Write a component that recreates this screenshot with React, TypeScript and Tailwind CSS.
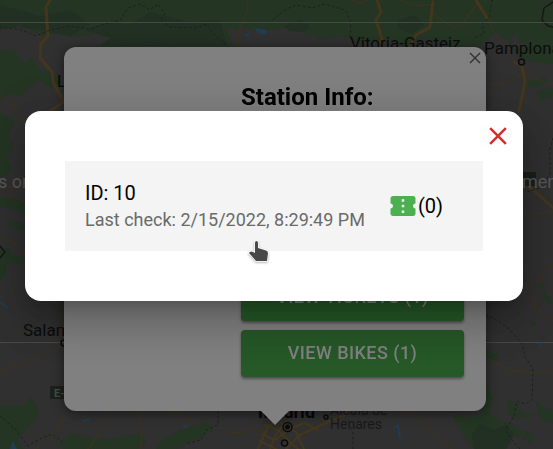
import React from "react";

const forest = [
  "M0 0H553V64L535 62L520 58L508 40L497 32L480 45L458 50L440 42L425 38L405 47L390 40L360 42L340 36L318 40L303 33L295 22L285 28L262 31L243 28L227 32L236 46L200 48L150 46L100 47L111 38L95 34L70 37L52 33L45 37L30 30L20 27L0 30Z",
  "M0 48L14 50L24 62L32 58L42 72L50 70L62 82L50 88L40 80L30 86L22 96L10 94L0 100Z",
  "M0 112L15 122L8 134L14 148L6 158L12 170L0 178Z",
  "M0 198L16 199L25 204V214L14 210L4 206L0 208Z",
  "M12 220L24 225V231L10 225Z",
  "M0 250L8 248L14 256L25 258L22 265L8 262L6 274L0 282Z",
  "M0 406L24 405L31 397L39 410L36 420L28 428L18 440L24 449H0Z",
  "M58 444L70 433L98 440L140 434L147 442L140 449H64Z",
  "M162 440L178 431L206 422L215 430L198 439L176 449H156Z",
  "M487 385L493 397L490 410L484 412Z",
  "M452 415L472 418L487 408L492 416L511 425L524 431L520 437L500 436L490 449H475L466 440Z",
  "M486 350L498 356L497 361L486 358Z",
  "M508 361L515 358L514 362Z",
  "M507 400L519 404L518 410L534 416L518 419L508 415Z",
  "M526 430L534 436L533 444L522 439Z",
  "M535 400L553 412V424L540 418Z",
  "M538 282L544 284L542 289Z",
  "M544 292L552 301L550 305L543 297Z",
  "M517 311L523 317L518 316Z",
  "M529 320L536 323L534 328Z",
  "M525 82L545 77L549 84L530 88Z",
  "M536 92L553 88V96L540 100Z",
];

const darkForest = [
  "M85 30L110 22L130 25L150 12L190 22L220 20L227 46H130L100 45L112 38Z",
  "M284 26L300 20L310 26L303 32L290 31Z",
  "M398 20L415 15L424 24L412 34L398 29Z",
  "M472 435L480 424L494 430L506 425L514 434L506 449H474Z",
  "M0 5L40 16L70 10L90 25L70 36L40 30L20 27L0 29Z",
];

const clearings = [
  "M8 32L18 26L32 34L36 41L58 36L48 42L28 46L0 50V33Z",
  "M226 28L240 30L248 46H233Z",
  "M510 38L520 33L518 42L530 46L515 50Z",
  "M273 36L287 32L303 37L318 34L315 47H283Z",
];

const roads = [
  "M50 0L46 7L48 36L41 44L40 58L52 72L53 82L60 95L64 102L50 111",
  "M377 0L381 12L376 20L382 39L378 47",
  "M409 47L416 35L430 27L433 2",
  "M476 0L484 13L487 18",
  "M514 62L522 66L525 82L519 111",
  "M525 183L540 196L553 208",
];

const minorRoads = [
  "M0 95L12 104L17 111",
  "M247 0L248 9L238 33L239 47",
  "M350 0L362 3L370 -2",
  "M400 0L415 6L434 4",
  "M434 15L455 28L462 24L477 4",
  "M477 4L490 24L498 38L514 60",
  "M40 33V47",
  "M15 115L25 122M0 187H25M0 191L25 202M0 238L14 243L25 255",
  "M0 371L31 360L64 345M61 301V340",
  "M64 410L62 422L52 434L42 438L36 449",
  "M487 83L505 84L516 77L526 72L546 84L553 83",
  "M525 286L534 280L540 283L546 266L553 266",
  "M525 295L540 311L553 321",
  "M525 215L553 212",
  "M486 358L510 370L530 373L553 371",
  "M88 449L104 427L112 411M138 411L143 430L140 449M170 411L200 424",
  "M227 432L242 433L255 429L268 432",
  "M404 411L424 422L436 435L452 449",
];

const borders = [
  "M0 27L22 30L36 36L50 30L70 26L90 29L105 24L120 20L128 8L140 4L150 10L158 4L165 14L160 20L170 27L195 28L207 24L215 36L228 46",
  "M273 20L285 10L296 5L312 8L325 4L345 10L351 23L350 40",
  "M492 0L489 18L482 24L484 34L474 38",
  "M486 315L500 322L510 330L522 344L525 357L533 368L532 400L525 404L517 401L514 416L506 430L512 440L520 449",
  "M553 138L550 150L550 174L540 188L527 192",
  "M0 416L16 430L28 446L38 440L52 434L62 442",
  "M218 411V425L206 430L201 440L185 444M353 449V434L350 425",
];

const cityRoads = [
  "M258 449L268 427L276 420L296 432L304 449",
  "M262 434L275 440L288 430L304 423L318 430",
  "M270 449L276 434L286 422M286 449L300 435L328 422L348 414",
  "M260 441L276 449M265 425L278 430L292 444L298 449",
];

function MapBackdrop() {
  return (
    <svg
      className="absolute inset-0 h-full w-full"
      viewBox="0 0 553 449"
      preserveAspectRatio="xMidYMid slice"
      fontFamily="Roboto, sans-serif"
      aria-hidden="true"
    >
      <rect width="553" height="449" fill="#303030" />
      {forest.map((d) => <path key={d} d={d} fill="#243523" />)}
      {darkForest.map((d) => <path key={d} d={d} fill="#222f23" />)}
      {clearings.map((d) => <path key={d} d={d} fill="#303030" />)}
      <g fill="none" strokeLinejoin="round" strokeLinecap="round">
        {minorRoads.map((d) => <path key={d} d={d} stroke="#3b3221" strokeWidth="1.3" />)}
        {cityRoads.map((d) => <path key={d} d={d} stroke="#42361d" strokeWidth="2" />)}
        {roads.map((d) => <path key={d} d={d} stroke="#43361d" strokeWidth="3" />)}
        {borders.map((d) => <path key={d} d={d} stroke="#1d211e" strokeDasharray="2 3" />)}
        <path d="M553 2L544 8L542 20L548 26L553 27" stroke="#171717" strokeWidth="1.5" />
        <path d="M0 246L5 252L0 258" stroke="#171717" strokeWidth="1.5" />
        <path d="M0 302L7 308M83 421L89 419M536 341L540 345M394 428L398 425L400 437" stroke="#203c50" strokeWidth="2" />
      </g>
      <path d="M243 35L250 33L248 37ZM254 28L262 29L268 31L265 35L258 33ZM13 440L17 449H10ZM182 425L190 426L184 428Z" fill="#203c50" />
      <path d="M0 22.5H553M0 342.5H553" stroke="#454a45" />
      <g fill="#0c0c0c" fontSize="17">
        <text x="350" y="49">Vitoria-Gasteiz</text>
        <text x="484" y="54">Pamplona</text>
        <text x="57" y="87">León</text>
        <text x="23" y="336">Salamanca</text>
      </g>
      <text x="258" y="418" fill="#080808" fontSize="18" fontWeight="700">Madrid</text>
      <g fill="#191919" fontSize="14">
        <text x="330" y="415">Alcalá de</text>
        <text x="330" y="429">Henares</text>
      </g>
      <g fill="none" stroke="#0c0c0c" strokeWidth="1.5">
        <circle cx="521.5" cy="62" r="3" />
        <circle cx="64" cy="343" r="3" />
        <circle cx="326" cy="417" r="2" />
        <circle cx="284.5" cy="443" r="3" />
        <circle cx="287.5" cy="427" r="4.5" />
      </g>
      <circle cx="287.5" cy="427" r="2.5" fill="#0c0c0c" />
      <rect x="50" y="386" width="22" height="13" fill="#1b211b" />
      <text x="54" y="397" fill="#484c48" fontSize="11" fontWeight="700">E-80</text>
      <rect x="520" y="172" width="16" height="14" fill="#191f19" />
      <g fill="#585858" fontSize="18">
        <text x="-2" y="188">s on</text>
        <text x="522" y="188">men</text>
      </g>
    </svg>
  );
}

const actionClass =
  "h-[47px] w-full rounded bg-[#265828] pb-[2px] text-lg font-medium tracking-wide text-[#808080] shadow-[0_2px_3px_rgba(0,0,0,0.4)]";

function StationPopup() {
  return (
    <section className="absolute top-[47px] left-[64px] w-[422px] drop-shadow-[0_2px_6px_rgba(0,0,0,0.5)]">
      <div className="flex flex-col items-end rounded-xl bg-[#808080] pt-8 pr-[22px] pb-[34px]">
        <div className="flex w-[223px] flex-col gap-[9px]">
          <h2 className="mb-[150px] text-2xl leading-9 font-bold text-black">Station Info:</h2>
          <button type="button" className={actionClass}>VIEW TICKETS (1)</button>
          <button type="button" className={actionClass}>VIEW BIKES (1)</button>
        </div>
      </div>
      <button type="button" aria-label="Close station info" className="absolute top-1 right-1">
        <svg className="size-[14px]" viewBox="0 0 14 14" stroke="#303030" strokeWidth="1.4">
          <path d="M2 2L12 12M12 2L2 12" />
        </svg>
      </button>
      <svg className="absolute top-full left-1/2 h-[14px] w-7 -translate-x-1/2" viewBox="0 0 28 14">
        <path d="M0 0H28L14 14Z" fill="#808080" />
      </svg>
    </section>
  );
}

function TicketIcon() {
  return (
    <svg className="size-[30px] shrink-0" viewBox="0 0 24 24" fill="#4caf50" aria-hidden="true">
      <path d="M22 10V6c0-1.11-.9-2-2-2H4c-1.1 0-1.99.89-1.99 2v4c1.1 0 1.99.9 1.99 2s-.89 2-2 2v4c0 1.1.9 2 2 2h16c1.1 0 2-.9 2-2v-4c-1.1 0-2-.9-2-2s.9-2 2-2zm-9 7.5h-2v-2h2v2zm0-4.5h-2v-2h2v2zm0-4.5h-2v-2h2v2z" />
    </svg>
  );
}

function TicketsDialog() {
  return (
    <div className="relative flex min-h-screen items-start pt-[111px] pr-[30px] pl-[25px]">
      <div
        role="dialog"
        aria-label="Tickets"
        className="relative w-full rounded-2xl bg-white px-10 py-[50px] shadow-[0_11px_15px_-7px_rgba(0,0,0,0.2),0_24px_38px_3px_rgba(0,0,0,0.14),0_9px_46px_8px_rgba(0,0,0,0.12)]"
      >
        <button type="button" aria-label="Close" className="absolute top-[10px] right-[10px]">
          <svg className="size-[30px]" viewBox="0 0 24 24" fill="#d32f2f">
            <path d="M19 6.41L17.59 5 12 10.59 6.41 5 5 6.41 10.59 12 5 17.59 6.41 19 12 13.41 17.59 19 19 17.59 13.41 12z" />
          </svg>
        </button>
        <div className="flex items-center gap-[23px] bg-[#f4f4f4] px-5 py-[18px]">
          <div className="whitespace-nowrap">
            <p className="text-xl leading-7 text-black">ID: 10</p>
            <p className="text-lg leading-[26px] text-[#6a6a6a]">Last check: 2/15/2022, 8:29:49 PM</p>
          </div>
          <div className="flex items-center text-xl text-black">
            <TicketIcon />
            <span>(0)</span>
          </div>
        </div>
      </div>
    </div>
  );
}

function HandCursor() {
  return (
    <svg
      className="pointer-events-none absolute top-[238px] left-[246px] h-7 w-6 drop-shadow-[0_1px_1px_rgba(0,0,0,0.3)]"
      viewBox="0 0 24 28"
      aria-hidden="true"
    >
      <path
        d="M9 5Q9 3 10.500 3Q12 3 12 5V10L20 12.500Q22 13 22 15L21 23H10L3 15Q4 12.500 7 14L9 15Z"
        fill="#484848"
        stroke="#fff"
        strokeWidth="1.5"
        paintOrder="stroke"
      />
    </svg>
  );
}

export default function App() {
  return (
    <main className="relative min-h-screen overflow-hidden bg-[#303030] font-[Roboto,sans-serif]">
      <MapBackdrop />
      <StationPopup />
      <TicketsDialog />
      <HandCursor />
    </main>
  );
}
